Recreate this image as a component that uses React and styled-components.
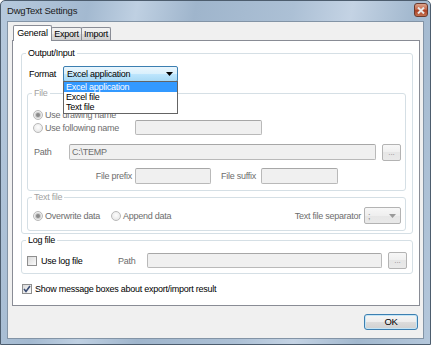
import React from "react";
import styled, { createGlobalStyle } from "styled-components";

const FONT = `"Liberation Sans", Arial, sans-serif`;

const GlobalStyle = createGlobalStyle`
  html, body { margin: 0; padding: 0; background: #ffffff; }
  body { font-family: ${FONT}; font-size: 9px; letter-spacing: -0.25px; color: #000; }
  *, *::before, *::after { box-sizing: border-box; }
`;

const Window = styled.div`
  width: 431px;
  height: 345px;
  border: 1px solid #4d5d6e;
  border-radius: 5px 5px 0 0;
  background: linear-gradient(100deg, #b6c9dd 0%, #a3b9d0 18%, #bfd0e2 28%, #9fb5cc 40%, #acc0d5 60%, #c4d3e4 72%, #a2b8ce 85%, #b4c7db 100%);
  display: flex;
  flex-direction: column;
  overflow: hidden;
`;

const TitleBar = styled.div`
  height: 20px;
  flex: none;
  display: flex;
  align-items: flex-start;
  padding: 0 2px 0 6px;
`;

const Title = styled.div`
  flex: 1;
  font-size: 9.5px;
  letter-spacing: -0.2px;
  line-height: 19px;
  color: #1b1b1b;
`;

const CloseButton = styled.div`
  margin-top: 2px;
  width: 14px;
  height: 14px;
  border: 1px solid #6b3a2e;
  border-radius: 3px;
  background: linear-gradient(#dca48c, #c4674a 45%, #ab4126 55%, #c3704f);
  display: flex;
  align-items: center;
  justify-content: center;
`;

const Client = styled.div`
  flex: 1;
  margin: 0 6px 5px 6px;
  border: 1px solid #8394a6;
  background: #f0f0f0;
  padding: 3px 3px 0 4px;
  display: flex;
  flex-direction: column;
`;

const TabStrip = styled.div`
  height: 15px;
  display: flex;
  align-items: flex-end;
  padding-left: 1px;
`;

const Tab = styled.div`
  position: relative;
  z-index: ${(p) => (p.$active ? 2 : 1)};
  width: ${(p) => p.$w}px;
  height: ${(p) => (p.$active ? 16 : 13)}px;
  margin-bottom: ${(p) => (p.$active ? -1 : 0)}px;
  margin-left: ${(p) => (p.$first ? 0 : -1)}px;
  border: 1px solid #898c95;
  border-bottom: none;
  border-radius: 2px 2px 0 0;
  background: ${(p) => (p.$active ? "#ffffff" : "linear-gradient(#f2f2f2, #ebebeb 50%, #dddddd 50%, #cfcfcf)")};
  display: flex;
  align-items: ${(p) => (p.$active ? "flex-start" : "center")};
  padding-top: ${(p) => (p.$active ? 1 : 0)}px;
  justify-content: center;
  line-height: 12px;
`;

const TabPanel = styled.div`
  height: 266px;
  flex: none;
  border: 1px solid #898c95;
  background: #ffffff;
  padding: 12px 6px 0 8px;
  display: flex;
  flex-direction: column;
`;

const Group = styled.div`
  position: relative;
  border: 1px solid #d5dfe5;
  border-radius: 3px;
  margin: ${(p) => p.$margin || "0"};
  padding: ${(p) => p.$padding || "0"};
  display: flex;
  flex-direction: column;
`;

const Legend = styled.span`
  position: absolute;
  top: -7px;
  left: 4px;
  padding: 0 2px;
  background: #ffffff;
  line-height: 12px;
  color: ${(p) => (p.$disabled ? "#a2a2a2" : "#000")};
`;

const Row = styled.div`
  display: flex;
  align-items: ${(p) => p.$align || "center"};
  height: ${(p) => p.$h}px;
  margin-top: ${(p) => p.$mt || 0}px;
  padding-left: ${(p) => p.$pl || 0}px;
  padding-right: ${(p) => p.$pr || 0}px;
`;

const Label = styled.span`
  flex: none;
  width: ${(p) => (p.$w ? `${p.$w}px` : "auto")};
  text-align: ${(p) => p.$align || "left"};
  color: ${(p) => (p.$disabled ? "#6d6d6d" : "#000")};
  line-height: 12px;
  white-space: nowrap;
`;

const Spacer = styled.div`
  flex: 1;
`;

const Option = styled.div`
  flex: none;
  width: ${(p) => (p.$w ? `${p.$w}px` : "auto")};
  display: flex;
  align-items: center;
  gap: ${(p) => p.$gap || 3}px;
  color: ${(p) => (p.$disabled ? "#6d6d6d" : "#000")};
  white-space: nowrap;
  line-height: 12px;
`;

const Radio = styled.span`
  width: 10px;
  height: 10px;
  flex: none;
  border-radius: 50%;
  border: 1px solid #b9b9b9;
  background: radial-gradient(circle at 50% 40%, #fdfdfd, #e2e2e2);
  display: flex;
  align-items: center;
  justify-content: center;
  &::after {
    content: "";
    width: 4px;
    height: 4px;
    border-radius: 50%;
    background: ${(p) => (p.$checked ? "#8a8a8a" : "transparent")};
    box-shadow: ${(p) => (p.$checked ? "0 0 0 1px #c9c9c9" : "none")};
  }
`;

const CheckBox = styled.span`
  width: 10px;
  height: 10px;
  flex: none;
  border: 1px solid #8f8f8f;
  background: linear-gradient(135deg, #dadada, #fbfbfb);
  display: flex;
  align-items: center;
  justify-content: center;
`;

const TextBox = styled.div`
  flex: none;
  width: ${(p) => p.$w}px;
  height: ${(p) => p.$h || 16}px;
  border: 1px solid #b9b9b9;
  border-top-color: #a7a7a7;
  border-radius: 2px;
  background: #f0f0f0;
  color: #6d6d6d;
  padding-left: 2px;
  line-height: ${(p) => (p.$h || 16) - 2}px;
  white-space: nowrap;
  overflow: hidden;
`;

const DotsButton = styled.div`
  flex: none;
  width: 19px;
  height: ${(p) => p.$h || 17}px;
  margin-left: 6px;
  border: 1px solid #b3b3b3;
  border-radius: 2px;
  background: linear-gradient(#f7f7f7, #efefef 50%, #e6e6e6 50%, #e9e9e9);
  color: #8c8c8c;
  font-size: 8px;
  letter-spacing: 0;
  display: flex;
  align-items: flex-end;
  justify-content: center;
  line-height: 10px;
  padding-bottom: 2px;
`;

const SelectWrap = styled.div`
  position: relative;
  flex: none;
`;

const Select = styled.div`
  width: ${(p) => p.$w}px;
  height: ${(p) => p.$h}px;
  border: 1px solid ${(p) => (p.$disabled ? "#b3b3b3" : "#3c7fb1")};
  border-radius: 2px;
  background: ${(p) =>
    p.$disabled
      ? "linear-gradient(#f7f7f7, #efefef 50%, #e6e6e6 50%, #e9e9e9)"
      : "linear-gradient(#eaf6fd, #d9f0fc 50%, #bee6fd 50%, #a7d9f5)"};
  color: ${(p) => (p.$disabled ? "#8c8c8c" : "#000")};
  display: flex;
  align-items: center;
  padding: 0 4px 0 3px;
  line-height: 12px;
`;

const SelectText = styled.span`
  flex: 1;
  white-space: nowrap;
`;

const DropList = styled.div`
  position: absolute;
  left: 0;
  top: 15px;
  width: 115px;
  z-index: 5;
  border: 1px solid #646464;
  background: #ffffff;
  padding: 0 0 1px 0;
`;

const DropItem = styled.div`
  height: 10px;
  line-height: 10px;
  padding-left: 2px;
  background: ${(p) => (p.$selected ? "#3399ff" : "transparent")};
  color: ${(p) => (p.$selected ? "#ffffff" : "#000")};
  white-space: nowrap;
`;

const Footer = styled.div`
  flex: 1;
  display: flex;
  justify-content: flex-end;
  align-items: flex-start;
  padding: 8px 2px 0 0;
`;

const OkButton = styled.div`
  width: 54px;
  height: 16px;
  border: 1px solid #3c7fb1;
  border-radius: 3px;
  background: linear-gradient(#f6f6f6, #ececec 50%, #dcdcdc 50%, #d0d0d0);
  box-shadow: inset 0 0 0 1px #c4e5f6;
  display: flex;
  align-items: center;
  justify-content: center;
  font-size: 9.5px;
  line-height: 12px;
`;

const Arrow = ({ color }) => (
  <svg width="7" height="4" viewBox="0 0 7 4">
    <path d="M0 0 H7 L3.5 4 Z" fill={color} />
  </svg>
);

export default function App() {
  return (
    <>
      <GlobalStyle />
      <Window>
        <TitleBar>
          <Title>DwgText Settings</Title>
          <CloseButton>
            <svg width="8" height="7" viewBox="0 0 8 7">
              <path d="M1 0.5 L7 6.5 M7 0.5 L1 6.5" stroke="#e8e8e8" strokeWidth="2" />
            </svg>
          </CloseButton>
        </TitleBar>
        <Client>
          <TabStrip>
            <Tab $active $first $w={39}>General</Tab>
            <Tab $w={31}>Export</Tab>
            <Tab $w={30}>Import</Tab>
          </TabStrip>
          <TabPanel>
            <Group $padding="0 0 2px 0">
              <Legend>Output/Input</Legend>
              <Row $h={16} $mt={12} $pl={7}>
                <Label $w={34}>Format</Label>
                <SelectWrap>
                  <Select $w={115} $h={16}>
                    <SelectText>Excel application</SelectText>
                    <Arrow color="#000" />
                  </Select>
                  <DropList>
                    <DropItem $selected>Excel application</DropItem>
                    <DropItem>Excel file</DropItem>
                    <DropItem>Text file</DropItem>
                  </DropList>
                </SelectWrap>
              </Row>

              <Group $margin="11px 6px 0 5px" $padding="15px 0 6px 0">
                <Legend $disabled>File</Legend>
                <Row $h={11} $pl={5}>
                  <Option $disabled $gap={2}>
                    <Radio $checked />
                    Use drawing name
                  </Option>
                </Row>
                <Row $h={15} $pl={5}>
                  <Option $disabled $gap={2} $w={102}>
                    <Radio />
                    Use following name
                  </Option>
                  <TextBox $w={127} $h={15} />
                </Row>
                <Row $h={17} $mt={9} $pl={6} $align="flex-start">
                  <Label $disabled $w={35} style={{ lineHeight: "16px" }}>Path</Label>
                  <TextBox $w={307}>C:\TEMP</TextBox>
                  <DotsButton>...</DotsButton>
                </Row>
                <Row $h={16} $mt={7} $pl={6}>
                  <Label $disabled $w={98} $align="right">File prefix</Label>
                  <TextBox $w={76} style={{ marginLeft: 3 }} />
                  <Label $disabled $w={37} style={{ marginLeft: 10 }}>File suffix</Label>
                  <TextBox $w={77} style={{ marginLeft: 3 }} />
                </Row>
              </Group>

              <Group $margin="6px 6px 0 5px" $padding="9px 4px 6px 5px">
                <Legend $disabled>Text file</Legend>
                <Row $h={17}>
                  <Option $disabled $gap={2} $w={78}>
                    <Radio $checked />
                    Overwrite data
                  </Option>
                  <Option $disabled $gap={2}>
                    <Radio />
                    Append data
                  </Option>
                  <Spacer />
                  <Label $disabled>Text file separator</Label>
                  <SelectWrap style={{ marginLeft: 3 }}>
                    <Select $disabled $w={37} $h={17}>
                      <SelectText>;</SelectText>
                      <Arrow color="#9a9a9a" />
                    </Select>
                  </SelectWrap>
                </Row>
              </Group>
            </Group>

            <Group $margin="6px 0 0 0" $padding="11px 4px 4px 5px">
              <Legend>Log file</Legend>
              <Row $h={17}>
                <Option $w={91} $gap={4}>
                  <CheckBox />
                  Use log file
                </Option>
                <Label $w={29} $disabled>Path</Label>
                <TextBox $w={235} $h={15} />
                <DotsButton>...</DotsButton>
              </Row>
            </Group>

            <Row $h={13} $mt={8} $pl={1}>
              <Option $gap={3}>
                <CheckBox>
                  <svg width="8" height="8" viewBox="0 0 8 8">
                    <path d="M1 4 L3 6.5 L7 1" fill="none" stroke="#3b4d74" strokeWidth="1.6" />
                  </svg>
                </CheckBox>
                Show message boxes about export/import result
              </Option>
            </Row>
          </TabPanel>
          <Footer>
            <OkButton>OK</OkButton>
          </Footer>
        </Client>
      </Window>
    </>
  );
}
